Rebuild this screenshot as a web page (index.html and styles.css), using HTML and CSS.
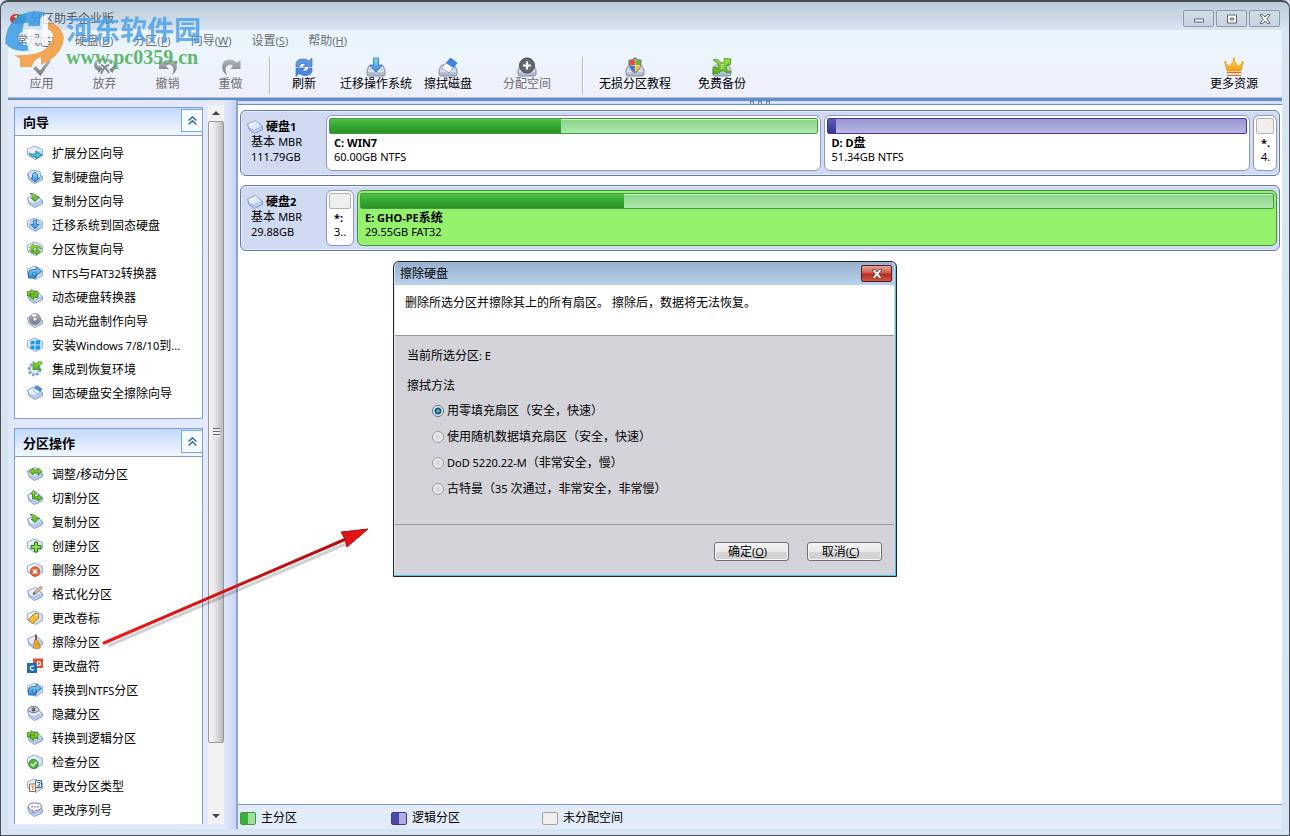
FILE: index.html
```html
<!DOCTYPE html>
<html lang="zh-CN">
<head>
  <meta charset="UTF-8">
  <title>分区助手企业版</title>
  <link rel="stylesheet" href="styles.css">
</head>
<body>

<!-- icon set -->
<svg class="defs" aria-hidden="true">
  <defs>
    <linearGradient id="gDrive" x1="0" y1="0" x2="1" y2="1"><stop offset="0" stop-color="#ffffff"/><stop offset="1" stop-color="#bcd4f5"/></linearGradient>
    <linearGradient id="gBlue" x1="0" y1="0" x2="0" y2="1"><stop offset="0" stop-color="#8fd6fa"/><stop offset="1" stop-color="#2f8cd8"/></linearGradient>
    <linearGradient id="gGreen" x1="0" y1="0" x2="0" y2="1"><stop offset="0" stop-color="#a5e63c"/><stop offset="1" stop-color="#4cae1c"/></linearGradient>
    <linearGradient id="gGray" x1="0" y1="0" x2="0" y2="1"><stop offset="0" stop-color="#b4b6ba"/><stop offset="1" stop-color="#75787e"/></linearGradient>
    <linearGradient id="gGold" x1="0" y1="0" x2="0" y2="1"><stop offset="0" stop-color="#ffd84a"/><stop offset="1" stop-color="#f59a12"/></linearGradient>
    <linearGradient id="gTray" x1="0" y1="0" x2="0" y2="1"><stop offset="0" stop-color="#dfe3ec"/><stop offset="1" stop-color="#a9b3c8"/></linearGradient>
    <linearGradient id="gRed" x1="0" y1="0" x2="1" y2="0"><stop offset="0" stop-color="#f01818"/><stop offset="1" stop-color="#b01010"/></linearGradient>
  </defs>

  <symbol id="hex" viewBox="0 0 16 16"><path d="M.6 4 7.500 1l7.900 3.500v6L8.500 14.500.6 10z" fill="url(#gDrive)" stroke="#93a6d6" stroke-linejoin="round"/></symbol>
  <symbol id="slab" viewBox="0 0 16 16"><path d="M.6 5 8.500 1.500l6.900 6v3L7.500 14.500 2 10.500z" fill="#bfd2f4" stroke="#8296c8" stroke-linejoin="round"/><path d="M.8 5 8.500 1.500l6.700 6L7 11.500 2 9z" fill="url(#gDrive)" stroke="#93a5d4" stroke-linejoin="round" stroke-width=".7"/></symbol>
  <symbol id="tray" viewBox="0 0 20 20"><path d="M3.500 8h13l2.500 5v4q0 2-2 2H3q-2 0-2-2v-4z" fill="url(#gTray)" stroke="#858fa6"/><path d="M2 14h16" stroke="#f3f6fb"/></symbol>

  <symbol id="i-extend" viewBox="0 0 16 16"><use href="#hex"/><path d="M2 8q3 2.500 7 .5V6l6 4-6 4v-2.500Q4 13 2 8z" fill="#46c4cf" stroke="#14708c" stroke-width=".8"/></symbol>
  <symbol id="i-copydisk" viewBox="0 0 16 16"><use href="#slab"/><path d="M1 4 5 1l8 1.500 1 6-6 4-6-4z" fill="#d0e3f9" stroke="#7f9acb" stroke-width=".8"/><path d="M5.500 9V5.500q2.500-4 5 0V9h2l-4.300 4L4 9z" fill="url(#gBlue)" stroke="#2261a2" stroke-width=".8"/></symbol>
  <symbol id="i-copypart" viewBox="0 0 16 16"><use href="#slab"/><path d="M3 .5q5-.5 6.500 3.500h3L8 8.500 4 5h2.500Q6 2.500 3 .5z" fill="url(#gGreen)" stroke="#2c7a12" stroke-width=".8"/></symbol>
  <symbol id="i-migrate" viewBox="0 0 16 16"><use href="#hex"/><circle cx="8" cy="8" r="5.500" fill="#b8d8f6" stroke="#86a6d8" stroke-width=".7"/><path d="M6.500 3.500h3V7.500h2.500l-4 4.500L4 7.500h2.500z" fill="url(#gBlue)" stroke="#2261a2" stroke-width=".8"/></symbol>
  <symbol id="i-recover" viewBox="0 0 16 16"><use href="#hex"/><path d="M2.500 6.500l4-4v2q7-.5 8 3.500-3-2-8-1v3.500zM13.500 10.500l-4 4v-2q-5 .5-7-3.500 4 2 7 .5V7z" fill="url(#gGreen)" stroke="#3c8a18" stroke-width=".6"/></symbol>
  <symbol id="i-ntfs" viewBox="0 0 16 16"><use href="#hex"/><path d="M1.500 13V8q0-3.500 4-3.500h3.500V2l5.500 4.500L9 11V8H5.500v2H9v3z" fill="url(#gBlue)" stroke="#1b5e9e" stroke-width=".8"/></symbol>
  <symbol id="i-dynamic" viewBox="0 0 16 16"><use href="#slab"/><path d="M.5 7V2.500H4V.5l3 2h4v6H6.500v2L3 8V5h5V4H3.500v3z" fill="url(#gGreen)" stroke="#3d8010" stroke-width=".8"/></symbol>
  <symbol id="i-cd" viewBox="0 0 16 16"><use href="#slab"/><circle cx="8" cy="6" r="5.500" fill="url(#gGray)" stroke="#7d828b" stroke-width=".8"/><path d="M8 6 4.500 2q3-2 5-.8z" fill="#eef0f3"/><circle cx="8" cy="6" r="2" fill="#fff" stroke="#767b85" stroke-width=".8"/></symbol>
  <symbol id="i-win" viewBox="0 0 16 16"><use href="#hex"/><path d="M3.500 4l4-.5v4h-4zM8.500 3.500l4.500-.5v4.500H8.500zM3.500 8.500h4v4l-4-.8zM8.500 8.500H13v4l-4.500 0z" fill="#1a9be8"/></symbol>
  <symbol id="i-gear" viewBox="0 0 16 16"><circle cx="7.500" cy="8.500" r="5.700" fill="#eaf1fb" stroke="#8ba2c4" stroke-width="2.500" stroke-dasharray="2.500 1.800"/><circle cx="7.500" cy="8.500" r="4.500" fill="#e4edf9" stroke="#8ba2c4"/><path d="M15.500 2 11.500 5.500 14 8.500H6V.5l2.500 2.500L12.500 0z" fill="url(#gGreen)" stroke="#2c8a18" stroke-width=".7"/></symbol>
  <symbol id="i-ssd" viewBox="0 0 16 16"><use href="#slab"/><path d="M6 5 10 .7l5 3.300-4 4.500z" fill="#4b8fe0" stroke="#3b66ac" stroke-width=".7"/><path d="M6 5l1.500-1.500 5 3.300-1.500 1.700z" fill="#fff"/></symbol>

  <symbol id="i-resize" viewBox="0 0 16 16"><use href="#slab"/><path d="M2 5.500 6 2v2h5V2l4 3.500L11 9V7H6v2z" fill="url(#gGreen)" stroke="#35800f" stroke-width=".8"/></symbol>
  <symbol id="i-split" viewBox="0 0 16 16"><use href="#slab"/><path d="M5.500 9V4H3.500L6.500.5 9.500 4h-2v3l3.500-.5v-2L15 8l-4 3V9z" fill="url(#gGreen)" stroke="#35800f" stroke-width=".8"/></symbol>
  <symbol id="i-create" viewBox="0 0 16 16"><use href="#hex"/><path d="M7.500 4h3v3.500H14v3h-3.500V14h-3v-3.500H4v-3h3.500z" fill="#8fe048" stroke="#25760e"/></symbol>
  <symbol id="i-delete" viewBox="0 0 16 16"><use href="#hex"/><circle cx="8" cy="9.500" r="4.800" fill="#e5673a" stroke="#c8481e" stroke-width=".8"/><path d="M6 7.500l4 4M10 7.500l-4 4" stroke="#fff" stroke-width="1.700"/></symbol>
  <symbol id="i-format" viewBox="0 0 16 16"><use href="#slab"/><path d="M6 8.500 7 6l6.500-5.500 2 1.500-7 6z" fill="#e3bd98" stroke="#8a6b56" stroke-width=".7"/><path d="M6 8.500 7 6l1.500 1.500z" fill="#444"/></symbol>
  <symbol id="i-label" viewBox="0 0 16 16"><use href="#hex"/><path d="M1.500 9.500 8 3l3.500 1v4L5.500 14z" fill="#f4bd2c" stroke="#a8700c" stroke-width=".8"/><circle cx="9.500" cy="5.500" r="1" fill="#fff"/></symbol>
  <symbol id="i-wipe" viewBox="0 0 16 16"><use href="#slab"/><path d="M8 .5h2v7H8z" fill="#8d5a30"/><path d="M7.500 6h3.500l2.500 8q-4 1-7 0z" fill="#f2b52e" stroke="#a9701a" stroke-width=".7"/><path d="M8.800 8v5M10.800 8.500v5" stroke="#b97d18" stroke-width=".6"/></symbol>
  <symbol id="i-letter" viewBox="0 0 16 16"><path d="M6 .5h10v9.500H6z" fill="#e2502c"/><path d="M0 5h10v10H0z" fill="#1f6fae"/><path d="M10.500 3.500h1q2 0 2 2t-2 2h-1z" fill="none" stroke="#fff" stroke-width="1.200"/><path d="M7 8.500q-1.500-1-3 0t0 3q1.500 1 3 0" fill="none" stroke="#fff" stroke-width="1.200"/></symbol>
  <symbol id="i-hide" viewBox="0 0 16 16"><use href="#slab"/><ellipse cx="6.500" cy="3.500" rx="5.500" ry="3" fill="#d7dae0" stroke="#61666f"/><circle cx="6.500" cy="3.500" r="2" fill="#4c5058"/><circle cx="6" cy="3" r=".6" fill="#fff"/></symbol>
  <symbol id="i-check" viewBox="0 0 16 16"><use href="#hex"/><circle cx="6.500" cy="10" r="4.700" fill="#4fb344" stroke="#2b8224" stroke-width=".8"/><path d="M4 10l2 2 3.500-4" fill="none" stroke="#fff" stroke-width="1.500"/></symbol>
  <symbol id="i-type" viewBox="0 0 16 16"><use href="#hex"/><path d="M8.500 2.500h6v7h-6z" fill="#fff" stroke="#286aa2"/><path d="M10 4.500h3v1.500L10.500 8H13" fill="none" stroke="#286aa2"/><path d="M2.500 6h6v7.500h-6z" fill="#fff" stroke="#b0622e"/><path d="M4.500 8H6v4" fill="none" stroke="#b0622e"/></symbol>
  <symbol id="i-serial" viewBox="0 0 16 16"><use href="#slab"/><path d="M8 1q6.500 0 6.500 3.500T9 8.500L6 11V8.500Q1.500 8 1.500 4.500T8 1z" fill="#fbfbff" stroke="#6b65b4" stroke-width=".9"/><path d="M4.500 4.800h1.200M7.400 4.800h1.200M10.300 4.800h1.200" stroke="#443f8c" stroke-width="1.300"/></symbol>

  <symbol id="t-apply" viewBox="0 0 20 20"><path d="M1 11.500 4 9l4 4.500L16 3l3 1-10.500 15z" fill="url(#gGray)"/></symbol>
  <symbol id="t-discard" viewBox="0 0 24 20"><path d="M1 8q0-5 6-6 3-1 5 1 3-2 7 0 4 2 4 6 0 3-3 5v2l-4-3 4-3.500q2-5-2-5.500-3-.5-4 1-3-3-6-1.500-5 .5-4 4.500l2 2v-2l4 4-5 4v-2.500Q1 12 1 8z" fill="url(#gGray)"/><path d="M8 8q4 1 8 8M16 8q-5 1-8 9" stroke="#85888e" stroke-width="2" fill="none"/></symbol>
  <symbol id="t-undo" viewBox="0 0 20 20"><path d="M1 3l3.500 2.500Q11 0 17 4.500q5 7-3 13.500 3-6 0-9-3-3-6 0l3 3H1z" fill="url(#gGray)"/></symbol>
  <symbol id="t-redo" viewBox="0 0 20 20"><path d="M19.500 3 16 5.500Q9 0 3 4.500q-5 7 3 14-3-7 0-9.500 3-3 6 0l-2.500 3h10z" fill="url(#gGray)"/></symbol>
  <symbol id="t-refresh" viewBox="0 0 20 20"><path d="M2 9.500Q1 2.500 8 2q4-.5 7 2l3-3v8.500H9L12 7Q6 5 5.500 9.500z" fill="#5b96e2" stroke="#2d62ae" stroke-width=".6"/><path d="M18 11q1 7-6 7.500-4 .5-7-2l-3 3V11h9L8 13.500q6 2 6.500-2.500z" fill="#4a88dc" stroke="#2d62ae" stroke-width=".6"/></symbol>
  <symbol id="t-migrate" viewBox="0 0 20 20"><use href="#tray"/><path d="M7.500 1h5v7.500H16L10 15 4 8.500h3.500z" fill="url(#gBlue)" stroke="#2570a6" stroke-width=".8"/></symbol>
  <symbol id="t-wipe" viewBox="0 0 20 20"><use href="#tray"/><path d="M4 11 12.500 1l6.500 5-8 9.500z" fill="#3f86e4" stroke="#2c5ea8" stroke-width=".7"/><path d="M4 11 8 6.300l7 4.400-4 4.800z" fill="#fff"/></symbol>
  <symbol id="t-alloc" viewBox="0 0 20 20"><use href="#tray"/><circle cx="10" cy="8.500" r="7.500" fill="#63666b" stroke="#45484d"/><path d="M10 4.500v8M6 8.500h8" stroke="#fff" stroke-width="2.200"/></symbol>
  <symbol id="t-guide" viewBox="0 0 20 20"><use href="#tray"/><path d="M10 1q3 2.500 6 2.500 0 9-6 12-6-3-6-12Q7 3.500 10 1z" fill="#fff" stroke="#7b7f8c" stroke-width="1.500"/><path d="M9.800 2v6H4.500V4Q7 4 9.800 2z" fill="#e5482c"/><path d="M10.200 2v6h5.300V4Q13 4 10.200 2z" fill="#6ab83a"/><path d="M9.800 8.500v6.300Q5.500 12.500 4.700 8.500z" fill="#3574d0"/><path d="M10.200 8.500v6.300q4.300-2.300 5.100-6.300z" fill="#f4c52c"/></symbol>
  <symbol id="t-backup" viewBox="0 0 20 20"><use href="#tray"/><path d="M1 3q5-2 8 3h2l2-3-1-1.500L19 2l-1 6-2-1-2 4q1 3 5 4-4 2-7-1H9q-3 4-6 2l-2 1.500V10l5 1-1.500 1.500Q7 12 7 9 6 5 1 3z" fill="url(#gGreen)" stroke="#2d8c1a" stroke-width=".8"/><path d="M9 7.500h2.500M9 9.500h2.500M9 11.500h2.500" stroke="#eaffd8" stroke-width=".8"/></symbol>
  <symbol id="t-crown" viewBox="0 0 20 20"><path d="M3 14 1 6l5 3.500L10 2.500l4 7L19 6l-2 8z" fill="url(#gGold)" stroke="#e09a1c" stroke-width=".7"/><circle cx="10" cy="2" r="1.400" fill="#f7b526"/><circle cx="1.500" cy="5.500" r="1.400" fill="#f7b526"/><circle cx="18.500" cy="5.500" r="1.400" fill="#f7b526"/><path d="M3 15.500h14M3 18.500h14" stroke="#e2663c"/><path d="M3 17h14" stroke="#fbd08a"/></symbol>
</svg>

<div class="window">
  <header class="titlebar">
    <svg class="app-icon" viewBox="0 0 16 12"><ellipse cx="6" cy="6" rx="6" ry="5" fill="#c33a34"/><path d="M7 2q9-2 9 4t-9 5z" fill="#2f8a52"/><path d="M3 4l4-2v3z" fill="#f3d6d0"/></svg>
    <span class="app-title">分区助手企业版</span>
    <div class="win-buttons">
      <button aria-label="最小化"><svg viewBox="0 0 12 10"><path d="M1.500 5h9v3h-9z" fill="#fff" stroke="#5a6474"/></svg></button>
      <button aria-label="最大化"><svg viewBox="0 0 12 10"><path d="M1.500 1h9v8h-9z" fill="#fff" stroke="#5a6474"/><path d="M4.500 4h3v2h-3z" fill="#fff" stroke="#5a6474"/></svg></button>
      <button aria-label="关闭"><svg viewBox="0 0 12 10"><path d="M1 .7h3l2 2.300 2-2.300h3L7.800 5 11 9.300H8L6 7 4 9.300H1L4.200 5z" fill="#fff" stroke="#5a6474"/></svg></button>
    </div>
  </header>

  <nav class="menubar">
    <a href="#">常规<span class="en">(<u>G</u>)</span></a>
    <a href="#">硬盘<span class="en">(<u>D</u>)</span></a>
    <a href="#">分区<span class="en">(<u>P</u>)</span></a>
    <a href="#">向导<span class="en">(<u>W</u>)</span></a>
    <a href="#">设置<span class="en">(<u>S</u>)</span></a>
    <a href="#">帮助<span class="en">(<u>H</u>)</span></a>
  </nav>

  <div class="toolbar">
    <button class="tool off"><svg><use href="#t-apply"/></svg>应用</button>
    <button class="tool off"><svg class="broad"><use href="#t-discard"/></svg>放弃</button>
    <button class="tool off"><svg><use href="#t-undo"/></svg>撤销</button>
    <button class="tool off"><svg><use href="#t-redo"/></svg>重做</button>
    <span class="sep first"></span>
    <button class="tool small"><svg><use href="#t-refresh"/></svg>刷新</button>
    <button class="tool wide"><svg><use href="#t-migrate"/></svg>迁移操作系统</button>
    <button class="tool small"><svg><use href="#t-wipe"/></svg>擦拭磁盘</button>
    <button class="tool big off"><svg><use href="#t-alloc"/></svg>分配空间</button>
    <span class="sep second"></span>
    <button class="tool big"><svg><use href="#t-guide"/></svg>无损分区教程</button>
    <button class="tool mid"><svg><use href="#t-backup"/></svg>免费备份</button>
    <button class="tool more"><svg><use href="#t-crown"/></svg>更多资源</button>
  </div>

  <div class="content">
    <aside class="sidebar">
      <div class="panels">
        <section class="panel">
          <div class="panel-head"><h2>向导</h2><button aria-label="折叠"><svg viewBox="0 0 8 8"><path d="M.5 4 4 .8 7.500 4M.5 7.500 4 4.300l3.500 3.200" fill="none" stroke="#3d6a94" stroke-width="1.300"/></svg></button></div>
          <ul>
            <li><a href="#"><svg><use href="#i-extend"/></svg>扩展分区向导</a></li>
            <li><a href="#"><svg><use href="#i-copydisk"/></svg>复制硬盘向导</a></li>
            <li><a href="#"><svg><use href="#i-copypart"/></svg>复制分区向导</a></li>
            <li><a href="#"><svg><use href="#i-migrate"/></svg>迁移系统到固态硬盘</a></li>
            <li><a href="#"><svg><use href="#i-recover"/></svg>分区恢复向导</a></li>
            <li><a href="#"><svg><use href="#i-ntfs"/></svg><span><span class="en">NTFS</span>与<span class="en">FAT32</span>转换器</span></a></li>
            <li><a href="#"><svg><use href="#i-dynamic"/></svg>动态硬盘转换器</a></li>
            <li><a href="#"><svg><use href="#i-cd"/></svg>启动光盘制作向导</a></li>
            <li><a href="#"><svg><use href="#i-win"/></svg><span>安装<span class="en">Windows 7/8/10</span>到<span class="en">...</span></span></a></li>
            <li><a href="#"><svg><use href="#i-gear"/></svg>集成到恢复环境</a></li>
            <li><a href="#"><svg><use href="#i-ssd"/></svg>固态硬盘安全擦除向导</a></li>
          </ul>
        </section>
        <section class="panel cut">
          <div class="panel-head"><h2>分区操作</h2><button aria-label="折叠"><svg viewBox="0 0 8 8"><path d="M.5 4 4 .8 7.500 4M.5 7.500 4 4.300l3.500 3.200" fill="none" stroke="#3d6a94" stroke-width="1.300"/></svg></button></div>
          <ul>
            <li><a href="#"><svg><use href="#i-resize"/></svg><span>调整<span class="en">/</span>移动分区</span></a></li>
            <li><a href="#"><svg><use href="#i-split"/></svg>切割分区</a></li>
            <li><a href="#"><svg><use href="#i-copypart"/></svg>复制分区</a></li>
            <li><a href="#"><svg><use href="#i-create"/></svg>创建分区</a></li>
            <li><a href="#"><svg><use href="#i-delete"/></svg>删除分区</a></li>
            <li><a href="#"><svg><use href="#i-format"/></svg>格式化分区</a></li>
            <li><a href="#"><svg><use href="#i-label"/></svg>更改卷标</a></li>
            <li><a href="#"><svg><use href="#i-wipe"/></svg>擦除分区</a></li>
            <li><a href="#"><svg><use href="#i-letter"/></svg>更改盘符</a></li>
            <li><a href="#"><svg><use href="#i-ntfs"/></svg><span>转换到<span class="en">NTFS</span>分区</span></a></li>
            <li><a href="#"><svg><use href="#i-hide"/></svg>隐藏分区</a></li>
            <li><a href="#"><svg><use href="#i-dynamic"/></svg>转换到逻辑分区</a></li>
            <li><a href="#"><svg><use href="#i-check"/></svg>检查分区</a></li>
            <li><a href="#"><svg><use href="#i-type"/></svg>更改分区类型</a></li>
            <li><a href="#"><svg><use href="#i-serial"/></svg>更改序列号</a></li>
          </ul>
        </section>
      </div>
      <div class="scrollbar">
        <span class="arrow up"></span>
        <div class="thumb"><span class="grip"></span></div>
        <div class="track"></div>
        <span class="arrow down"></span>
      </div>
    </aside>

    <main class="main">
      <div class="splitter"><i></i><i></i><i></i></div>
      <div class="disks">
        <div class="disk">
          <div class="disk-info">
            <div class="disk-name"><svg><use href="#slab"/></svg>硬盘<span class="en">1</span></div>
            <div>基本 <span class="en">MBR</span></div>
            <div class="en">111.79GB</div>
          </div>
          <div class="part" style="flex-grow: 495">
            <div class="bar green"><div class="used" style="width: 47.400%"></div></div>
            <div class="part-text"><b class="en">C: WIN7</b><span class="en">60.00GB NTFS</span></div>
          </div>
          <div class="part" style="flex-grow: 426">
            <div class="bar purple"><div class="used" style="width: 2%"></div></div>
            <div class="part-text"><b><span class="en">D: D</span>盘</b><span class="en">51.34GB NTFS</span></div>
          </div>
          <div class="part free narrow">
            <div class="bar none"></div>
            <div class="part-text"><b class="en">*.</b><span class="en">4.</span></div>
          </div>
        </div>

        <div class="disk">
          <div class="disk-info">
            <div class="disk-name"><svg><use href="#slab"/></svg>硬盘<span class="en">2</span></div>
            <div>基本 <span class="en">MBR</span></div>
            <div class="en">29.88GB</div>
          </div>
          <div class="part free">
            <div class="bar none"></div>
            <div class="part-text"><b class="en">*:</b><span class="en">3..</span></div>
          </div>
          <div class="part selected" style="flex-grow: 920">
            <div class="bar green"><div class="used" style="width: 28.800%"></div></div>
            <div class="part-text"><b><span class="en">E: GHO-PE</span>系统</b><span class="en">29.55GB FAT32</span></div>
          </div>
        </div>
      </div>

      <footer class="legend">
        <span><i class="key primary"></i>主分区</span>
        <span><i class="key logical"></i>逻辑分区</span>
        <span><i class="key empty"></i>未分配空间</span>
      </footer>
    </main>
  </div>
</div>

<form class="dialog" role="dialog" aria-label="擦除硬盘">
  <div class="dialog-title"><span>擦除硬盘</span><button type="button" class="close" aria-label="关闭"><svg viewBox="0 0 12 10"><path d="M1 .7h3l2 2.300 2-2.300h3L7.800 5 11 9.300H8L6 7 4 9.300H1L4.200 5z" fill="#fff" stroke="#6b3a3a" stroke-width=".8"/></svg></button></div>
  <p class="dialog-intro">删除所选分区并擦除其上的所有扇区。 擦除后，数据将无法恢复。</p>
  <div class="dialog-body">
    <p>当前所选分区<span class="en">: E</span></p>
    <fieldset>
      <legend>擦拭方法</legend>
      <label><input type="radio" name="method" checked>用零填充扇区（安全，快速）</label>
      <label><input type="radio" name="method">使用随机数据填充扇区（安全，快速）</label>
      <label><input type="radio" name="method"><span><span class="en">DoD 5220.22-M</span>（非常安全，慢）</span></label>
      <label><input type="radio" name="method"><span>古特曼（<span class="en">35 </span>次通过，非常安全，非常慢）</span></label>
    </fieldset>
  </div>
  <div class="dialog-actions">
    <button type="button">确定<span class="en">(<u>O</u>)</span></button>
    <button type="button">取消<span class="en">(<u>C</u>)</span></button>
  </div>
</form>

<svg class="pointer" viewBox="0 0 280 130" aria-hidden="true">
  <path d="M8 124 248 21" stroke="#000" stroke-opacity=".18" stroke-width="3"/>
  <path d="M4 121 246 17" stroke="url(#gRed)" stroke-width="3" stroke-linecap="round"/>
  <path d="M268 7 241 10l4 7 2 8z" fill="#e01414" stroke="#b01010"/>
</svg>

<div class="watermark">
  <svg viewBox="0 0 60 60" aria-hidden="true">
    <path d="M1 31Q4 4 30 1q8 0 15 3-8-1-9 5v7H24q2-4-3-3Q8 17 1 31z" fill="#3b9be6"/>
    <path d="M1 33Q4 17 20 13l-2 9q-9 6 2 13l7 1v4Q10 44 1 33z" fill="#3b9be6"/>
    <path d="M24 19h7v9h7V10q0-6 8-5-2 2-2 5v25h-6v-2h-7v7h-7z" fill="#fff" fill-opacity=".9"/>
    <path d="M44 12q13 2 16 16-2 15-14 22l-9 5v-8q-8 3-9 10H16V49l-6-4q30 2 38-14 3-9-4-12z" fill="#f39a3a"/>
  </svg>
  <div><span class="wm-name">河东软件园</span><span class="wm-url">www.pc0359.cn</span></div>
</div>

</body>
</html>
```

FILE: styles.css
```css
* {
  box-sizing: border-box;
}

body {
  margin: 0;
  position: relative;
  overflow: hidden;
  background: #dce3ec;
  color: #000;
  font-family: "Noto Sans", "Noto Sans CJK SC", sans-serif;
  font-size: 12px;
  line-height: 16px;
}

.defs {
  position: absolute;
  width: 0;
  height: 0;
}

.en {
  font-size: 11px;
}

button {
  font: inherit;
  color: inherit;
  padding: 0;
}

a {
  color: inherit;
  text-decoration: none;
}

/* window frame */
.window {
  height: 100vh;
  display: flex;
  flex-direction: column;
  padding: 0 7px 6px;
  border: 1px solid #4a4d58;
  border-top-width: 2px;
  border-radius: 8px 8px 0 0;
  background: linear-gradient(#bccbda, #d9e6f2 30px, #d5e4f2);
}

.titlebar {
  display: flex;
  align-items: center;
  height: 28px;
  flex-shrink: 0;
  padding: 5px 2px 0;
}

.app-icon {
  width: 16px;
  height: 12px;
  margin-right: 4px;
}

.app-title {
  color: #4c5866;
}

.win-buttons {
  display: flex;
  gap: 2px;
  margin-left: auto;
}

.win-buttons button {
  display: flex;
  align-items: center;
  justify-content: center;
  width: 31px;
  height: 17px;
  background: linear-gradient(#d2dce8, #c6d3e1);
  border: 1px solid #8c99ae;
  border-radius: 2px;
}

.win-buttons svg,
.close svg {
  width: 12px;
  height: 10px;
}

.menubar {
  display: flex;
  align-items: center;
  gap: 20px;
  height: 20px;
  flex-shrink: 0;
  padding: 2px 8px 0;
  background: #eaf4fc;
  color: #6a6f75;
}

.toolbar {
  display: flex;
  height: 50px;
  flex-shrink: 0;
  padding: 6px 0 0 2px;
  background: linear-gradient(#ecf5fd, #eeeffa);
  border-top: 1px solid #f3f8fd;
  border-bottom: 2px solid #5d8fcb;
  box-shadow: inset 0 -1px #b9bfcc;
}

.tool {
  display: flex;
  flex-direction: column;
  align-items: center;
  width: 63px;
  background: none;
  border: none;
  white-space: nowrap;
  line-height: 14px;
}

.tool svg {
  width: 20px;
  height: 20px;
}

.tool svg.broad {
  width: 24px;
}

.tool.off { color: #6c6c70; }
.tool.small { width: 56px; }
.tool.mid { width: 72px; }
.tool.wide { width: 88px; }
.tool.big { width: 102px; }

.tool.more {
  width: 96px;
  margin-left: auto;
}

.sep {
  width: 2px;
  height: 37px;
  border-left: 1px solid #b4bac6;
  background: #fff;
}

.sep.first {
  margin: 0 5px 0 7px;
}

.sep.second {
  margin-left: 4px;
}

.content {
  display: flex;
  flex: 1;
  min-height: 0;
}

/* sidebar */
.sidebar {
  display: flex;
  gap: 5px;
  width: 228px;
  flex-shrink: 0;
  padding: 5px 12px 5px 6px;
  background: linear-gradient(90deg, #dfe8fa, #e4e9fd 215px, #c8d4f6);
}

.panels {
  display: flex;
  flex-direction: column;
  gap: 9px;
  flex: 1;
  min-width: 0;
  padding-top: 2px;
  overflow: hidden;
}

.panel {
  flex-shrink: 0;
  background: #fff;
  border: 1px solid #7f9fd0;
}

.panel.cut {
  flex: 1;
  min-height: 0;
  overflow: hidden;
  border-bottom: none;
}

.panel-head {
  display: flex;
  justify-content: space-between;
  height: 28px;
  padding: 1px 0 0 8px;
  background: linear-gradient(#c2d8fc, #f3f8ff);
  border-bottom: 1px solid #7f9fd0;
}

.panel-head h2 {
  margin: 0;
  font-size: 13px;
  line-height: 26px;
}

.panel-head button {
  width: 21px;
  height: 23px;
  background: #f5fafe;
  border: 1px solid #7fa6d0;
  border-right: none;
}

.panel-head svg {
  width: 9px;
  height: 9px;
}

.panel ul {
  list-style: none;
  margin: 0;
  padding: 6px 0 12px 12px;
}

.panel li a {
  display: flex;
  align-items: center;
  gap: 9px;
  height: 24px;
  white-space: nowrap;
}

.panel li svg {
  width: 16px;
  height: 16px;
  margin-bottom: 2px;
}

.scrollbar {
  display: flex;
  flex-direction: column;
  width: 16px;
  background: #f1f1f2;
}

.arrow {
  height: 16px;
  border: 4px solid transparent;
}

.arrow::before {
  content: "";
  display: block;
  width: 0;
  border: 4px solid transparent;
}

.arrow.up::before { border-bottom-color: #444; border-top: 0; margin-top: 2px; }
.arrow.down::before { border-top-color: #444; border-bottom: 0; margin-top: 2px; }

.thumb {
  display: flex;
  align-items: center;
  justify-content: center;
  flex: 622;
  background: linear-gradient(90deg, #f5f5f5, #e4e4e5 45%, #b9babd);
  border: 1px solid #94969b;
  border-radius: 2px;
}

.grip {
  width: 7px;
  height: 9px;
  background: repeating-linear-gradient(#666 0 1px, #eee 1px 3px);
}

.track {
  flex: 65;
}

/* disk list */
.main {
  display: flex;
  flex-direction: column;
  flex: 1;
  min-width: 0;
  background: #fff;
  border-left: 2px solid #8fa3cd;
}

.splitter {
  display: flex;
  align-items: center;
  justify-content: center;
  gap: 4px;
  height: 5px;
  background: #d5e0f8;
  border-top: 1px solid #6b8dc4;
  border-bottom: 1px solid #6b8dc4;
}

.splitter i {
  width: 4px;
  height: 4px;
  border: 1px solid #6f84ad;
}

.disks {
  display: flex;
  flex-direction: column;
  flex: 1;
  gap: 9px;
  padding: 5px 2px;
}

.disk {
  display: flex;
  gap: 3px;
  height: 66px;
  padding: 4px 2px;
  background: #d0daf1;
  border: 1px solid #6379b0;
  border-radius: 6px;
  box-shadow: inset 0 0 0 1px #e6ecf9;
}

.disk-info {
  width: 80px;
  flex-shrink: 0;
  padding: 4px 0 0 8px;
  line-height: 15px;
}

.disk-name {
  display: flex;
  align-items: center;
  gap: 3px;
  height: 15px;
  margin-left: -4px;
  font-weight: bold;
}

.disk-name svg {
  width: 16px;
  height: 16px;
}

.disk-name .en {
  margin-left: -3px;
}

.part {
  flex: 1 1 0;
  min-width: 0;
  padding: 2px;
  background: #fff;
  border: 1px solid #8f98c4;
  border-radius: 6px;
}

.part.selected {
  background: #93f16b;
  border-color: #4b8f4b;
}

.part.free {
  flex: 0 0 28px;
}

.part.free.narrow {
  flex-basis: 24px;
}

.bar {
  height: 16px;
  border: 1px solid;
  border-radius: 2px;
}

.used {
  height: 100%;
}

.bar.green {
  border-color: #3f9c42;
  background: linear-gradient(#8bd489, #aee8ad);
  box-shadow: inset 0 1px #cdf3cb;
}

.bar.green .used { background: linear-gradient(#55bf4b, #38ad35 40%, #2a9127); }

.bar.purple {
  border-color: #3f3a8c;
  background: linear-gradient(#9795d0, #b9b7e4);
}

.bar.purple .used { background: linear-gradient(#5b59bf, #38348f); }

.bar.none {
  border-color: #b3b1af;
  background: repeating-linear-gradient(45deg, #f4f2f0 0 2px, #ebe9e7 2px 3px);
}

.part-text {
  display: flex;
  flex-direction: column;
  padding: 2px 0 0 5px;
  line-height: 14px;
  white-space: nowrap;
  overflow: hidden;
}

.legend {
  display: grid;
  grid-template-columns: 151px 151px auto;
  align-items: center;
  height: 25px;
  padding: 2px 0 0 2px;
  background: #e3ebf9;
  border-top: 1px solid #7f9bcb;
}

.legend span {
  display: flex;
  align-items: center;
  gap: 5px;
}

.key {
  width: 16px;
  height: 13px;
  border: 1px solid;
  border-radius: 2px;
}

.key.primary { border-color: #3a9a3c; background: linear-gradient(90deg, #3bae38 50%, #a0e09c 50%); }
.key.logical { border-color: #3f3a8c; background: linear-gradient(90deg, #4a47ad 50%, #b0aee2 50%); }
.key.empty { border-color: #a3a09d; background: #f1efed; }

/* wipe dialog */
.dialog {
  position: absolute;
  left: 393px;
  top: 261px;
  width: 504px;
  background: #d4d3d9;
  border: 1px solid #1e2430;
  border-radius: 6px 6px 0 0;
  box-shadow: inset -1px -1px #4cc4ea, inset 1px 0 #dfeaf5;
  padding: 0 2px 2px 1px;
}

.dialog p {
  margin: 0;
}

.dialog-title {
  display: flex;
  align-items: center;
  justify-content: space-between;
  height: 23px;
  padding: 0 2px 0 5px;
  background: linear-gradient(#98b0cd, #b9d1ec);
  border-radius: 5px 5px 0 0;
}

.close {
  display: flex;
  align-items: center;
  justify-content: center;
  width: 31px;
  height: 17px;
  border: 1px solid #571c1c;
  border-radius: 2px;
  background: linear-gradient(#e0a59b, #cc5b4c 48%, #b3291b 52%, #cf5a45);
}

.dialog-intro {
  height: 51px;
  padding: 10px;
  background: #fff;
  border-bottom: 1px solid #98989c;
}

.dialog-body {
  padding: 12px 12px 22px;
}

fieldset {
  margin: 14px 0 0;
  padding: 4px 0 0 25px;
  border: none;
}

legend {
  margin-left: -25px;
  padding: 0;
}

fieldset label {
  display: flex;
  align-items: center;
  gap: 3px;
  height: 26px;
}

input[type=radio] {
  appearance: none;
  width: 12px;
  height: 12px;
  margin: 0;
  border: 1px solid #9b9da0;
  border-radius: 50%;
  background: radial-gradient(#d5d5d7, #f5f5f5);
}

input[type=radio]:checked {
  border-color: #4a6f85;
  background: radial-gradient(circle, #3bb6d8 0 1px, #123c5a 3px, #f4f8fa 4px);
}

.dialog-actions {
  display: flex;
  justify-content: flex-end;
  gap: 18px;
  padding: 17px 12px 13px;
  border-top: 1px solid #98989c;
}

.dialog-actions button {
  width: 75px;
  height: 19px;
  padding-right: 8px;
  line-height: 16px;
  border: 1px solid #707073;
  border-radius: 3px;
  background: linear-gradient(#f3f3f3, #e9e9ea 50%, #d6d6d8 52%, #d0d0d2);
  box-shadow: inset 0 0 0 1px #f7f7f7;
}

.pointer {
  position: absolute;
  left: 100px;
  top: 522px;
  width: 280px;
  height: 130px;
  pointer-events: none;
}

/* site watermark */
.watermark {
  position: absolute;
  left: 4px;
  top: 10px;
  display: flex;
  pointer-events: none;
  opacity: .85;
}

.watermark svg {
  width: 60px;
  height: 60px;
}

.watermark div {
  display: flex;
  flex-direction: column;
  padding: 4px 0 0 2px;
}

.wm-name {
  font-size: 27px;
  line-height: 32px;
  font-weight: bold;
  color: #4ea2e8;
}

.wm-url {
  font-family: "Liberation Serif", serif;
  font-size: 20px;
  line-height: 22px;
  font-weight: bold;
  color: #4cae58;
}
```
